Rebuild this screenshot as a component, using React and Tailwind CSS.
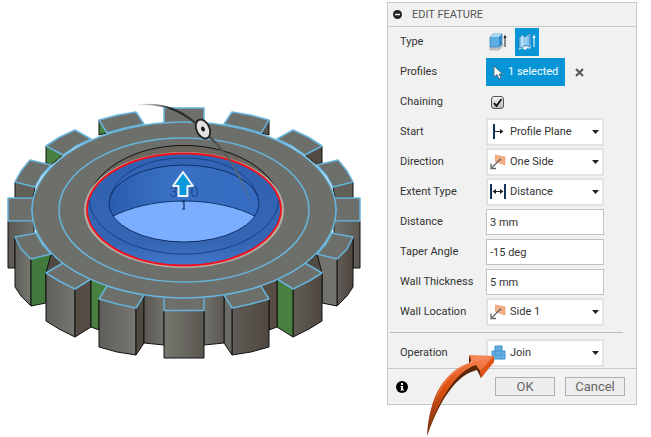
import { useState } from 'react'

const UPPER_TOPS = [
  // one polygon per tooth, left half of the gear, back to front
  '99,120 118,115 136,112 144,124 125,128 107,133',
  '46,146 60,137 75,130 91,139 76,146 63,155',
  '15,182 21,171 30,160 51,165 41,176 35,187',
  '8,198 34,198 32,209 33,221 8,221',
]

const LOWER_TOPS = [
  '15,237 36,233 42,244 51,254 31,259 21,249',
  '46,273 63,263 76,272 91,279 75,289 59,281',
  '99,299 107,286 125,291 144,295 136,308 117,304',
]

function GearHalf({ faces, ...rest }) {
  return (
    <g {...rest}>
      <g stroke="#111" strokeWidth="1" strokeLinejoin="round">
        <polygon points="99,120 107,133 99,135" fill={faces.slotBack} />
        <polygon points="46,146 63,155 51,165 46,163" fill={faces.slotUpper} />
        <polygon points="15,182 35,187 33,198 15,198" fill="#625f59" />
        <polygon points="8,221 34,221 34,233 15,237 15,268 8,268" fill="url(#side)" />
      </g>
      {UPPER_TOPS.map(p => (
        <polygon key={p} points={p} fill="#6d706a" stroke="#67b4dc" strokeWidth="1.5" strokeLinejoin="round" />
      ))}
      <g stroke="#111" strokeWidth="1" strokeLinejoin="round">
        <polygon points="15,237 21,249 31,259 31,306 21,296 15,287" fill={faces.front} />
        <polygon points="31,259 51,254 56,260 46,273 46,303 31,306" fill={faces.slotA} />
        <polygon points="51,254 63,263 46,273" fill="#514a43" />
        <polygon points="46,273 59,281 75,289 75,337 59,329 46,321" fill={faces.front} />
        <polygon points="75,289 91,279 91,327 75,337" fill={faces.slotB} />
        <polygon points="91,279 107,286 99,299 99,330 91,327" fill={faces.slotC} />
        <polygon points="99,299 117,304 136,308 136,355 117,352 99,347" fill={faces.front} />
        <polygon points="136,308 144,295 144,343 136,355" fill={faces.slotD} />
        <polygon points="144,295 164,297 164,345 144,343" fill="url(#side)" />
      </g>
      {LOWER_TOPS.map(p => (
        <polygon key={p} points={p} fill="#6d706a" stroke="#67b4dc" strokeWidth="1.5" strokeLinejoin="round" />
      ))}
    </g>
  )
}

function Gear() {
  const green = '#48803f'
  return (
    <svg viewBox="0 0 387 437" className="block h-auto w-full" role="img" aria-label="Gear model">
      <defs>
        <linearGradient id="side" x1="0" x2="1">
          <stop offset="0" stopColor="#5c5852" />
          <stop offset="1" stopColor="#71716b" />
        </linearGradient>
        <linearGradient id="front" x1="0" x2="1">
          <stop offset="0" stopColor="#77776f" />
          <stop offset="1" stopColor="#595650" />
        </linearGradient>
        <linearGradient id="rightFront" x1="0" x2="1">
          <stop offset="0" stopColor="#4f4740" />
          <stop offset="1" stopColor="#5f5c56" />
        </linearGradient>
        <linearGradient id="leftFront" x1="0" x2="1">
          <stop offset="0" stopColor="#5f5e59" />
          <stop offset="1" stopColor="#767770" />
        </linearGradient>
        <linearGradient id="wall" x1="0" x2="1">
          <stop offset="0" stopColor="#2a5cae" />
          <stop offset="0.4" stopColor="#3970c3" />
          <stop offset="1" stopColor="#356bc0" />
        </linearGradient>
        <linearGradient id="ring" x1="0" x2="0" y1="0" y2="1">
          <stop offset="0" stopColor="#3062b1" />
          <stop offset="0.8" stopColor="#3565b3" />
          <stop offset="1" stopColor="#4276ca" />
        </linearGradient>
        <linearGradient id="handle" x1="0" x2="1">
          <stop offset="0" stopColor="#999" stopOpacity="0.2" />
          <stop offset="0.3" stopColor="#222" />
          <stop offset="0.75" stopColor="#555" />
          <stop offset="1" stopColor="#777" stopOpacity="0.3" />
        </linearGradient>
        <clipPath id="hole">
          <ellipse cx="184" cy="203.500" rx="75" ry="38.500" />
        </clipPath>
      </defs>

      <GearHalf faces={{ slotBack: green, slotUpper: green, front: 'url(#leftFront)', slotA: '#417a3c', slotB: '#554c44', slotC: green, slotD: '#504941' }} />
      <GearHalf
        transform="matrix(-1 0 0 1 368 0)"
        faces={{ slotBack: '#57544e', slotUpper: '#514a43', front: 'url(#rightFront)', slotA: '#72736c', slotB: green, slotC: '#564d45', slotD: '#696b65' }}
      />
      <path d="M164 123V108H204V123" fill="#6d706a" stroke="#67b4dc" strokeWidth="1.5" />
      <path d="M164 310H204V358H164Z" fill="url(#front)" stroke="#111" />

      {/* top face */}
      <path d="M164 294V310.500H204V294" fill="#6d706a" stroke="#67b4dc" strokeWidth="1.5" />
      <ellipse cx="184" cy="210" rx="152" ry="88" fill="#6d706a" stroke="#67b4dc" strokeWidth="1.5" />
      <ellipse cx="184" cy="210" rx="125" ry="72" fill="none" stroke="#67b4dc" strokeWidth="1.5" />

      {/* bore */}
      <path d="M92 188C107 162 143 145.500 184 145.500S261 162 276 188Z" fill="#6b675f" stroke="#111" />
      <ellipse cx="184" cy="210" rx="100" ry="58" fill="#b5aaa4" />
      <ellipse cx="184" cy="209.500" rx="97" ry="56" fill="url(#ring)" stroke="#f50f18" strokeWidth="1.800" />
      <path d="M89 200C91 230 133 254 184 254S277 230 279 200" fill="none" stroke="#173f84" />
      <path d="M110 196C119 171 149 158 184 158S249 171 258 196" fill="#3364b5" stroke="#173f84" />
      <ellipse cx="184" cy="203.500" rx="75" ry="38.500" fill="url(#wall)" />
      <ellipse cx="184" cy="256" rx="103" ry="55" fill="#7baeff" stroke="#12376f" clipPath="url(#hole)" />
      <ellipse cx="184" cy="203.500" rx="75" ry="38.500" fill="none" stroke="#102f68" />
      <text x="184" y="197" textAnchor="middle" fill="#1d4c92" className="font-[Roboto,sans-serif] text-[15px]">3.00</text>

      {/* angle handle */}
      <path d="M138 105C162 102 179 108 196 122L195 124C178 110 162 104 138 105ZM210 136C230 154 240 172 252 206C238 174 229 156 209 138Z" fill="url(#handle)" />
      <path d="M138 105C162 102 179 109 196 123M210 137C229 155 239 173 252 206" fill="none" stroke="url(#handle)" strokeWidth="0.800" />
      <ellipse cx="203" cy="129" rx="6.500" ry="10" transform="rotate(-25 203 129)" fill="#e2e2e0" stroke="#222" strokeWidth="1.800" />
      <ellipse cx="203" cy="129" rx="1.800" ry="2.600" transform="rotate(-25 203 129)" fill="#111" />
      <path d="M182 202 184 201V209M182 209H185" fill="none" stroke="#102f68" strokeWidth="1.200" />
      <path d="M183 172 193 186H187.500V196H178.500V186H173Z" fill="#0c98dd" stroke="#eef6fb" strokeWidth="2" strokeLinejoin="round" />
    </svg>
  )
}

const ICONS = {
  plane: (
    <>
      <path d="M4 1V16" stroke="#14325c" strokeWidth="2" />
      <path d="M5 8.500H12" stroke="#222" />
      <path d="M10 6 13.500 8.500 10 11Z" fill="#222" />
    </>
  ),
  side: (
    <>
      <path d="M5.500 2 15 4V12L5.500 8.500Z" fill="#f5b083" stroke="#e69a6c" strokeWidth="0.700" />
      <path d="M10.500 6 2 14.500M1 10.500V15.500H6" fill="none" stroke="#666" strokeWidth="1.300" />
      <circle cx="10.500" cy="6.500" r="1" fill="#777" />
    </>
  ),
  distance: (
    <>
      <path d="M1 1V16M15 1V16" stroke="#14325c" strokeWidth="2" />
      <path d="M4 8.500H12" stroke="#222" />
      <path d="M2.500 8.500 6 6V11ZM13.500 8.500 10 6V11Z" fill="#222" />
    </>
  ),
  join: (
    <>
      <path d="M5 2H12V7H15V15H2V7H5Z" fill="#62aee3" stroke="#3f8fc9" />
      <path d="M5 7V11H12V7H5" fill="none" stroke="#4593cb" />
    </>
  ),
}

function Row({ label, id, children }) {
  return (
    <div className="flex h-[30px] items-center pl-3">
      <label htmlFor={id} className="w-[86px] shrink-0 whitespace-nowrap">{label}</label>
      {children}
    </div>
  )
}

function SelectField({ label, id, icon, options }) {
  return (
    <Row label={label} id={id}>
      <div className="relative h-7 w-[118px]">
        <select id={id} className="block h-full w-full appearance-none border-2 border-[#e2e2e2] bg-white pl-[22px] text-[#333] outline-none">
          {options.map(o => <option key={o}>{o}</option>)}
        </select>
        <svg viewBox="0 0 17 17" className="pointer-events-none absolute left-1 top-[5px] size-[17px]">{ICONS[icon]}</svg>
        <svg viewBox="0 0 7 4" className="pointer-events-none absolute right-[5px] top-3 h-1 w-[7px]"><path d="M0 0H7L3.500 4Z" fill="#222" /></svg>
      </div>
    </Row>
  )
}

function TextField({ label, id, value }) {
  return (
    <Row label={label} id={id}>
      <input id={id} type="text" defaultValue={value} className="h-[26px] w-[118px] border border-[#c4c4c4] bg-white px-[3px] text-[#333] outline-none" />
    </Row>
  )
}

function ExtrudeIcon() {
  return (
    <svg viewBox="0 0 18 18" className="size-[18px]">
      <path d="M1 14V17H10L14 13V11Z" fill="#c4c4c4" stroke="#999" strokeWidth="0.500" />
      <path d="M1 4 4 1H13V11L10 14H1Z" fill="#5cadE2" stroke="#2b7fb8" strokeWidth="0.700" />
      <path d="M1 4 4 1H13L10 4Z" fill="#a7d9f7" />
      <path d="M10 4 13 1V11L10 14Z" fill="#3289c5" />
      <path d="M16 14V3" stroke="#222" />
      <path d="M14.500 5 16 1.500 17.500 5Z" fill="#222" />
    </svg>
  )
}

function ThinExtrudeIcon() {
  return (
    <svg viewBox="0 0 18 18" className="size-[18px]">
      <path d="M1 14V17L4 15 7 17 10 15 12 16 13 12Z" fill="#ececec" />
      <path d="M1 5 4 2 7 4 10 1H13V12L11 14 8 12 5 14 1 15Z" fill="#7cc0ec" stroke="#1c73ae" strokeWidth="0.700" />
      <path d="M4 2 6 4V13L3 14V5Z" fill="#b5ddf6" />
      <path d="M10 1H13V12L11 13V4Z" fill="#4c9fd8" />
      <path d="M8 4V12" stroke="#a9d7f4" strokeWidth="1.500" />
      <path d="M16 14V3" stroke="#fff" />
      <path d="M14.500 5 16 1.500 17.500 5Z" fill="#fff" />
    </svg>
  )
}

function PointerArrow() {
  return (
    <svg viewBox="0 0 70 84" className="pointer-events-none absolute -bottom-[32px] left-[38px] h-[84px] w-[70px]" aria-hidden="true">
      <defs>
        <linearGradient id="arrow" x1="0.700" x2="0.200" y1="0" y2="1">
          <stop offset="0" stopColor="#f27c4b" />
          <stop offset="0.500" stopColor="#dd500f" />
          <stop offset="1" stopColor="#863716" />
        </linearGradient>
      </defs>
      <path d="M43 3 46 8 43 12ZM67 9 55 26 51 18C30 23 14 48 1 84C10 44 27 20 51 12Z" fill="#5c2605" />
      <path d="M43 3 68 4 55 20 50 13C31 19 14 44 1 84C3 44 19 18 46 10Z" fill="url(#arrow)" />
      <path d="M68 4V10L55 26 54 19Z" fill="#e05314" />
      <path d="M45 4 66 5 52 9C31 14 15 32 8 54C13 31 27 16 46 10Z" fill="#f79167" opacity="0.500" />
    </svg>
  )
}

export default function App() {
  const [chaining, setChaining] = useState(true)

  return (
    <main className="flex items-start bg-white font-[Roboto,sans-serif] text-[11px] leading-4 text-[#333]">
      <div className="min-w-0 flex-1">
        <Gear />
      </div>

      <form className="relative mr-[14px] mt-[2px] w-[250px] shrink-0 border border-[#c8c8c8] bg-[#f1f1f1]" onSubmit={e => e.preventDefault()}>
        <header className="flex h-6 items-center gap-[10px] border-b border-[#c8c8c8] pl-[5px]">
          <svg viewBox="0 0 9 9" className="size-[9px]">
            <circle cx="4.500" cy="4.500" r="4.500" fill="#222" />
            <path d="M2 4.500H7" stroke="#fff" strokeWidth="1.500" />
          </svg>
          <h1 className="text-[#555]">EDIT FEATURE</h1>
        </header>

        <Row label="Type" id="type-solid">
          <button id="type-solid" type="button" aria-label="Extrude" className="flex h-7 w-6 items-center justify-center"><ExtrudeIcon /></button>
          <button type="button" aria-label="Thin extrude" aria-pressed="true" className="ml-[5px] flex h-7 w-6 items-center justify-center bg-[#0696d7]"><ThinExtrudeIcon /></button>
        </Row>
        <Row label="Profiles" id="profiles">
          <button id="profiles" type="button" className="flex h-7 w-[79px] items-center gap-[5px] bg-[#0696d7] pl-[7px] whitespace-nowrap text-white">
            <svg viewBox="0 0 10 15" className="h-[15px] w-[10px]"><path d="M1 1V12L4 9.500 6 14 8 13 6 9H9.500Z" fill="#fff" stroke="#555" strokeWidth="0.800" /></svg>
            1 selected
          </button>
          <button type="button" aria-label="Clear profiles" className="ml-[10px]">
            <svg viewBox="0 0 9 9" className="size-[9px]"><path d="M1 1 8 8M8 1 1 8" stroke="#555" strokeWidth="2" /></svg>
          </button>
        </Row>
        <Row label="Chaining" id="chaining">
          <div className="relative ml-[5px] size-[13px]">
            <input id="chaining" type="checkbox" checked={chaining} onChange={e => setChaining(e.target.checked)} className="block size-[13px] appearance-none rounded-[3px] border border-[#555] bg-linear-to-b from-[#f5f5f5] to-[#bbb]" />
            {chaining && (
              <svg viewBox="0 0 13 13" className="pointer-events-none absolute inset-0"><path d="M3 7 5.500 10 10.500 3" fill="none" stroke="#111" strokeWidth="1.800" /></svg>
            )}
          </div>
        </Row>
        <SelectField label="Start" id="start" icon="plane" options={['Profile Plane', 'Offset Plane', 'Object']} />
        <SelectField label="Direction" id="direction" icon="side" options={['One Side', 'Two Sides', 'Symmetric']} />
        <SelectField label="Extent Type" id="extent" icon="distance" options={['Distance', 'To Object', 'All']} />
        <TextField label="Distance" id="distance" value="3 mm" />
        <TextField label="Taper Angle" id="taper" value="-15 deg" />
        <TextField label="Wall Thickness" id="thickness" value="5 mm" />
        <SelectField label="Wall Location" id="location" icon="side" options={['Side 1', 'Side 2', 'Center']} />

        <hr className="my-[5px] ml-[2px] mr-[13px] border-[#bbb]" />
        <SelectField label="Operation" id="operation" icon="join" options={['Join', 'Cut', 'Intersect']} />

        <footer className="flex h-9 items-center gap-[10px] border-t border-[#c8c8c8] pl-2 pr-[11px] text-[13px] text-[#666]">
          <svg viewBox="0 0 12 12" className="mr-auto size-3">
            <circle cx="6" cy="6" r="6" fill="#000" />
            <path d="M5 2H7V4H5ZM4.500 5H7V8.500H8V9.500H4.500V8.500H5V6H4.500Z" fill="#fff" />
          </svg>
          <button type="submit" className="h-[19px] w-[60px] border border-[#b0b0b0] bg-[#ededed] leading-4">OK</button>
          <button type="button" className="h-[19px] w-[60px] border border-[#b0b0b0] bg-[#ededed] leading-4">Cancel</button>
        </footer>

        <PointerArrow />
      </form>
    </main>
  )
}
